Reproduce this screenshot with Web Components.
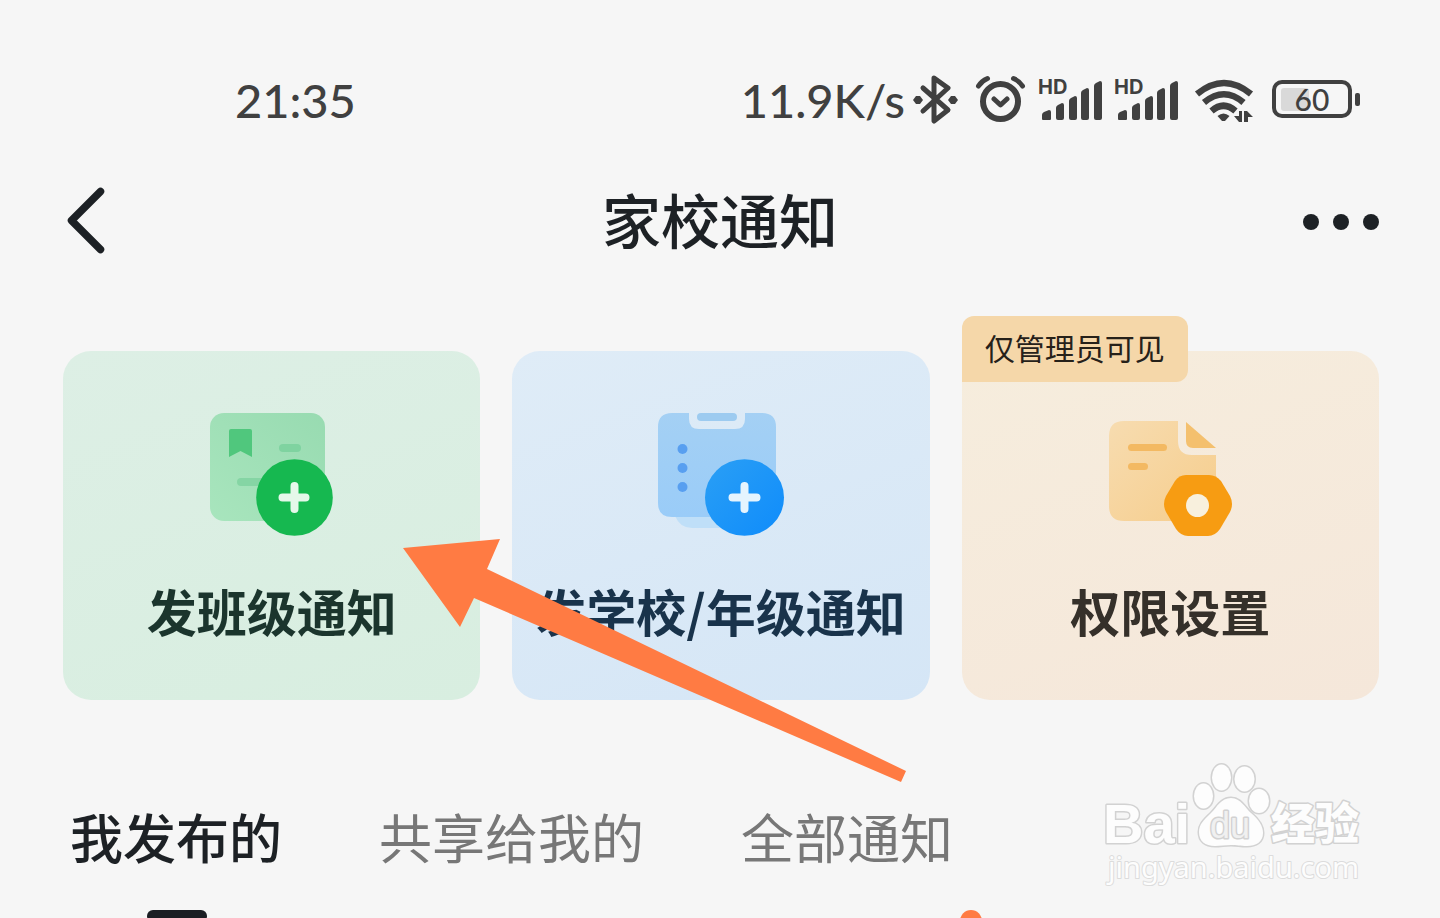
<!DOCTYPE html>
<html lang="zh-CN">
<head>
<meta charset="UTF-8">
<meta name="viewport" content="width=device-width, initial-scale=1">
<title>家校通知</title>
<style>
    body {
        margin: 0;
        background: #f6f6f6;
        font-family: "Noto Sans CJK SC", sans-serif;
        color: #1d2125;
    }
</style>
</head>
<body>
<notice-page>
    <status-bar slot="status" time="21:35" speed="11.9K/s" battery="60"></status-bar>
    <nav-bar slot="nav">家校通知</nav-bar>
    <action-card slot="cards" tone="green">
        <class-icon slot="icon"></class-icon>发班级通知
    </action-card>
    <action-card slot="cards" tone="blue">
        <school-icon slot="icon"></school-icon>发学校/年级通知
    </action-card>
    <action-card slot="cards" tone="orange" badge="仅管理员可见">
        <permission-icon slot="icon"></permission-icon>权限设置
    </action-card>
    <pointer-arrow slot="pointer"></pointer-arrow>
    <tab-strip slot="tabs"></tab-strip>
    <site-watermark slot="watermark"></site-watermark>
</notice-page>

<script>
class NoticePage extends HTMLElement {
    constructor() {
        super();
        this.attachShadow({ mode: 'open' });
        this.shadowRoot.innerHTML = `
            <style>
                :host {
                    display: block;
                    position: relative;
                    height: 100vh;
                    box-sizing: border-box;
                    padding-top: 70px;
                    overflow: hidden;
                }
                .cards {
                    position: relative;
                    display: grid;
                    grid-template-columns: repeat(3, 1fr);
                    gap: 32px;
                    margin: 92px 61px 0 63px;
                }
                .watermark {
                    position: absolute;
                    right: 70px;
                    top: 760px;
                }
            </style>
            <slot name="status"></slot>
            <slot name="nav"></slot>
            <main>
                <div class="cards">
                    <slot name="cards"></slot>
                    <slot name="pointer"></slot>
                </div>
                <slot name="tabs"></slot>
            </main>
            <div class="watermark"><slot name="watermark"></slot></div>
        `;
    }
}

class StatusBar extends HTMLElement {
    constructor() {
        super();
        this.attachShadow({ mode: 'open' });
        const signal = `
            <svg width="76" height="60" viewBox="1033 70 76 60">
                <text class="hd" x="1038" y="94">HD</text>
                <path d="M1042 119v-4q0-2 2-3l5-2q2 0 2 2v7q0 1-1 1h-7q-1 0-1-1z
                    M1056 118v-10q0-2 2-3l4-2q2 0 2 2v13q0 2-2 2h-4q-2 0-2-2z
                    M1069 118v-17q0-2 2-3l4-2q2 0 2 2v20q0 2-2 2h-4q-2 0-2-2z
                    M1081 118v-25q0-2 2-3l4-2q2 0 2 2v28q0 2-2 2h-4q-2 0-2-2z
                    M1094 118v-32q0-2 2-3l4-2q2 0 2 2v35q0 2-2 2h-4q-2 0-2-2z"/>
            </svg>`;
        this.shadowRoot.innerHTML = `
            <style>
                :host {
                    display: flex;
                    align-items: center;
                    justify-content: space-between;
                    height: 60px;
                    padding: 0 77px 0 235px;
                    color: #404040;
                    font-family: Lato, "Liberation Sans", sans-serif;
                    font-size: 47px;
                    font-weight: 500;
                    line-height: 60px;
                }
                .right {
                    display: flex;
                    align-items: center;
                }
                svg {
                    display: block;
                    fill: currentColor;
                }
                .line {
                    fill: none;
                    stroke: currentColor;
                    stroke-width: 6;
                    stroke-linecap: round;
                    stroke-linejoin: round;
                }
                .hd {
                    font: bold 20px Inter, sans-serif;
                }
                .level {
                    font: 500 30px Lato, sans-serif;
                    text-anchor: middle;
                }
            </style>
            <span>${this.getAttribute('time')}</span>
            <div class="right">
                <span>${this.getAttribute('speed')}</span>
                <svg width="62" height="60" viewBox="905 70 62 60">
                    <path class="line" style="stroke-width:5" d="M923 88l25 22-14 11V78l14 10-25 23"/>
                    <path d="M913 100l3-4h4l3 4-3 4h-4zM948 100l3-4h4l3 4-3 4h-4z"/>
                </svg>
                <svg width="66" height="60" viewBox="967 70 66 60">
                    <circle class="line" cx="1000.500" cy="101.500" r="17.500"/>
                    <path class="line" style="stroke-width:5" d="M994 99l6.500 6 6.500-6M978.500 86q3-5 9-7.500M1022.500 86q-3-5-9-7.500"/>
                </svg>
                ${signal}
                ${signal}
                <svg width="78" height="60" viewBox="1185 70 78 60">
                    <path class="line" style="stroke-width:6.500;stroke-linecap:butt" d="M1197 94q27-22 54 0M1204 102.500q20-16.500 39.500 0M1211.500 111q12-10.500 24 0"/>
                    <path d="M1217.500 116q6-5 12 0l-4.500 5h-3z"/>
                    <path d="M1239 111h3v11h-3l-5-6h5zM1244 122v-11h3l6 6h-5v5z"/>
                </svg>
                <svg width="100" height="60" viewBox="1263 70 100 60">
                    <rect x="1281" y="88" width="28" height="23" rx="3" fill="#d9d9d9"/>
                    <rect class="line" style="stroke-width:4" x="1274" y="82" width="76" height="34" rx="8"/>
                    <rect x="1355" y="93" width="5" height="13" rx="2"/>
                    <text class="level" x="1312" y="111">${this.getAttribute('battery')}</text>
                </svg>
            </div>
        `;
    }
}

class NavBar extends HTMLElement {
    constructor() {
        super();
        this.attachShadow({ mode: 'open' });
        this.shadowRoot.innerHTML = `
            <style>
                :host {
                    display: grid;
                    grid-template-columns: 1fr auto 1fr;
                    align-items: start;
                    margin-top: 49px;
                    padding: 0 60px;
                }
                h1 {
                    margin: 0;
                    font-size: 59px;
                    font-weight: 500;
                    line-height: 80px;
                }
                button {
                    display: block;
                    padding: 0;
                    border: none;
                    background: none;
                    color: inherit;
                    cursor: pointer;
                }
                .more {
                    justify-self: end;
                }
                svg {
                    display: block;
                }
            </style>
            <button aria-label="返回">
                <svg width="50" height="80" viewBox="60 179 50 80">
                    <path d="M100.500 191.500L71.500 220.500l29 29" fill="none" stroke="currentColor" stroke-width="7.500" stroke-linecap="round" stroke-linejoin="round"/>
                </svg>
            </button>
            <h1><slot></slot></h1>
            <button class="more" aria-label="更多">
                <svg width="80" height="80" viewBox="1300 179 80 80" fill="currentColor">
                    <circle cx="1311" cy="222" r="8"/>
                    <circle cx="1341" cy="222" r="8"/>
                    <circle cx="1371" cy="222" r="8"/>
                </svg>
            </button>
        `;
    }
}

class ActionCard extends HTMLElement {
    constructor() {
        super();
        this.attachShadow({ mode: 'open' });
        const badge = this.getAttribute('badge');
        this.shadowRoot.innerHTML = `
            <style>
                :host {
                    display: block;
                    position: relative;
                    --fill: linear-gradient(160deg, #ddefe5, #d8eee0);
                    --ink: #1b352d;
                }
                :host([tone="blue"]) {
                    --fill: linear-gradient(160deg, #dfecf7, #d5e6f6);
                    --ink: #19334b;
                }
                :host([tone="orange"]) {
                    --fill: linear-gradient(160deg, #f6eddd, #f5e7da);
                    --ink: #35302a;
                }
                button {
                    display: flex;
                    flex-direction: column;
                    align-items: center;
                    gap: 30px;
                    width: 100%;
                    padding: 59px 0 50px;
                    border: none;
                    border-radius: 28px;
                    background: var(--fill);
                    color: var(--ink);
                    font-family: inherit;
                    font-size: 50px;
                    font-weight: 700;
                    line-height: 80px;
                    white-space: nowrap;
                    cursor: pointer;
                }
                .badge {
                    position: absolute;
                    left: 0;
                    top: -35px;
                    padding: 0 23px 4px;
                    border-radius: 12px 12px 12px 0;
                    background: #f5d7a9;
                    color: #26211a;
                    font-size: 30px;
                    line-height: 62px;
                }
            </style>
            <button><slot name="icon"></slot><span><slot></slot></span></button>
            ${badge ? `<span class="badge">${badge}</span>` : ''}
        `;
    }
}

class ClassIcon extends HTMLElement {
    constructor() {
        super();
        this.attachShadow({ mode: 'open' });
        this.shadowRoot.innerHTML = `
            <style>
                :host, svg { display: block; }
            </style>
            <svg width="132" height="130" viewBox="206 410 132 130">
                <defs>
                    <linearGradient id="sheet" x1="1" y1="0" x2="0" y2="1">
                        <stop offset="0" stop-color="#98dbb1"/>
                        <stop offset="1" stop-color="#a8e5bd"/>
                    </linearGradient>
                </defs>
                <rect x="210" y="413" width="115" height="108" rx="14" fill="url(#sheet)"/>
                <path d="M229 431q0-2 2-2h19q2 0 2 2v26l-11.500-6-11.500 6z" fill="#50c77d"/>
                <rect x="279" y="444" width="22" height="8" rx="4" fill="#7fd3a0"/>
                <rect x="237" y="478" width="30" height="8" rx="4" fill="#85d5a4"/>
                <circle cx="294.500" cy="497.500" r="38.300" fill="#16b850"/>
                <path d="M294.500 486v23M282.500 497.500h23" stroke="#e5f8ea" stroke-width="8" stroke-linecap="round"/>
            </svg>
        `;
    }
}

class SchoolIcon extends HTMLElement {
    constructor() {
        super();
        this.attachShadow({ mode: 'open' });
        this.shadowRoot.innerHTML = `
            <style>
                :host, svg { display: block; }
            </style>
            <svg width="134" height="130" viewBox="654 410 134 130">
                <defs>
                    <linearGradient id="board" x1="0" y1="0" x2="0" y2="1">
                        <stop offset="0" stop-color="#a4d0f4"/>
                        <stop offset="1" stop-color="#9accf8"/>
                    </linearGradient>
                    <linearGradient id="disc" x1="0" y1="0" x2="1" y2="1">
                        <stop offset="0" stop-color="#2a9ff5"/>
                        <stop offset="1" stop-color="#0f8cfb"/>
                    </linearGradient>
                </defs>
                <path d="M675 516h60v12h-43q-12 0-17-12z" fill="#bfdff8"/>
                <path d="M672 413h17v6q0 10 10 10h36q10 0 10-10v-6h17q14 0 14 14v76q0 14-14 14h-90q-14 0-14-14v-76q0-14 14-14z" fill="url(#board)"/>
                <rect x="697" y="413" width="40" height="8" rx="4" fill="#9dcbf0"/>
                <g fill="#589ff0">
                    <circle cx="682.500" cy="449" r="5"/>
                    <circle cx="682.500" cy="468" r="5"/>
                    <circle cx="682.500" cy="487" r="5"/>
                </g>
                <ellipse cx="744.500" cy="497.500" rx="39.500" ry="38.300" fill="url(#disc)"/>
                <path d="M744.500 486v23M732.500 497.500h24" stroke="#e5f4fe" stroke-width="8" stroke-linecap="round"/>
            </svg>
        `;
    }
}

class PermissionIcon extends HTMLElement {
    constructor() {
        super();
        this.attachShadow({ mode: 'open' });
        this.shadowRoot.innerHTML = `
            <style>
                :host, svg { display: block; }
            </style>
            <svg width="130" height="130" viewBox="1105 410 130 130">
                <defs>
                    <linearGradient id="paper" x1="0" y1="0" x2="1" y2="1">
                        <stop offset="0" stop-color="#f7dcb0"/>
                        <stop offset="1" stop-color="#f6cd8c"/>
                    </linearGradient>
                </defs>
                <path d="M1124 421h54v20q0 14 14 14h24v66h-92q-15 0-15-15v-70q0-15 15-15z" fill="url(#paper)"/>
                <path d="M1186 422l30 26h-23q-7 0-7-7z" fill="#f4c06e"/>
                <rect x="1128" y="444" width="39" height="7" rx="3.500" fill="#f3b962"/>
                <rect x="1128" y="463" width="20" height="7" rx="3.500" fill="#f3b962"/>
                <path d="M1186 475h23q7 0 12 6l9 15q4 8 0 16l-10 17q-5 7-12 7h-20q-7 0-12-7l-10-17q-4-8 0-16l9-15q4-6 11-6z" fill="#f79c12"/>
                <circle cx="1197.500" cy="505.500" r="11.500" fill="#f8f0dd"/>
            </svg>
        `;
    }
}

// Drawn over the cards, from the tabs up to the first card
class PointerArrow extends HTMLElement {
    constructor() {
        super();
        this.attachShadow({ mode: 'open' });
        this.shadowRoot.innerHTML = `
            <style>
                :host {
                    position: absolute;
                    left: 340px;
                    top: 186px;
                    pointer-events: none;
                }
                svg { display: block; }
            </style>
            <svg width="504" height="246" viewBox="403 537 504 246">
                <path d="M403 548l97-9-13 30 419 202-5 11-427-184-14 29z" fill="#ff7b43"/>
            </svg>
        `;
    }
}

class TabStrip extends HTMLElement {
    constructor() {
        super();
        this.attachShadow({ mode: 'open' });
        this.shadowRoot.innerHTML = `
            <style>
                :host {
                    display: block;
                    margin-top: 96px;
                    padding: 0 70px;
                }
                div {
                    display: flex;
                    gap: 97px;
                }
                button {
                    position: relative;
                    padding: 0 0 40px;
                    border: none;
                    background: none;
                    color: #777;
                    font-family: inherit;
                    font-size: 53px;
                    line-height: 80px;
                    white-space: nowrap;
                    cursor: pointer;
                }
                button[aria-selected="true"] {
                    color: #1d2125;
                    font-weight: 500;
                }
                button::after {
                    content: "";
                    position: absolute;
                    top: 114px;
                }
                button[aria-selected="true"]::after {
                    left: calc(50% - 29px);
                    width: 60px;
                    height: 12px;
                    border-radius: 6px;
                    background: #1b1e23;
                }
                .dot::after {
                    right: -29px;
                    width: 22px;
                    height: 22px;
                    border-radius: 50%;
                    background: #ff7b43;
                }
            </style>
            <div role="tablist">
                <button role="tab" aria-selected="true">我发布的</button>
                <button role="tab" aria-selected="false">共享给我的</button>
                <button role="tab" aria-selected="false" class="dot">全部通知</button>
            </div>
        `;
        this.tabs = this.shadowRoot.querySelectorAll('button');
        this.tabs.forEach((tab) => {
            tab.addEventListener('click', () => this.select(tab));
        });
    }

    select(tab) {
        this.tabs.forEach((t) => t.setAttribute('aria-selected', String(t === tab)));
    }
}

class SiteWatermark extends HTMLElement {
    constructor() {
        super();
        this.attachShadow({ mode: 'open' });
        this.shadowRoot.innerHTML = `
            <style>
                :host { display: block; }
                svg {
                    display: block;
                    fill: #fdfdfd;
                    stroke: #d2d2d2;
                    stroke-width: 3;
                    paint-order: stroke;
                    stroke-linejoin: round;
                }
                .bai { font: bold 56px "Liberation Sans", sans-serif; }
                .du { font: 36px "Liberation Sans", sans-serif; fill: #f0f0f0; }
                .cn { font: 900 44px "Noto Sans CJK SC", sans-serif; }
                .url { font: 29px "Noto Sans", sans-serif; stroke-width: 2; stroke: #dcdcdc; }
            </style>
            <svg width="270" height="130" viewBox="1100 760 270 130">
                <text class="bai" x="1103" y="843">Bai</text>
                <ellipse cx="1203.500" cy="796" rx="9.500" ry="12.500"/>
                <ellipse cx="1221.500" cy="777.500" rx="9.500" ry="13"/>
                <ellipse cx="1244.500" cy="779" rx="10" ry="12.500"/>
                <ellipse cx="1259" cy="801" rx="10" ry="12"/>
                <path d="M1231 798c10 0 14 10 20 15 8 7 12 13 12 20 0 9-7 13-16 13-7 0-10-1-16-1s-10 1-16 1c-10 0-16-5-16-14 0-8 5-12 12-19 6-6 10-15 20-15z"/>
                <text class="du" x="1210" y="838">du</text>
                <text class="cn" x="1271" y="840">经验</text>
                <text class="url" x="1108" y="878">jingyan.baidu.com</text>
            </svg>
        `;
    }
}

customElements.define('notice-page', NoticePage);
customElements.define('status-bar', StatusBar);
customElements.define('nav-bar', NavBar);
customElements.define('action-card', ActionCard);
customElements.define('class-icon', ClassIcon);
customElements.define('school-icon', SchoolIcon);
customElements.define('permission-icon', PermissionIcon);
customElements.define('pointer-arrow', PointerArrow);
customElements.define('tab-strip', TabStrip);
customElements.define('site-watermark', SiteWatermark);
</script>
</body>
</html>
